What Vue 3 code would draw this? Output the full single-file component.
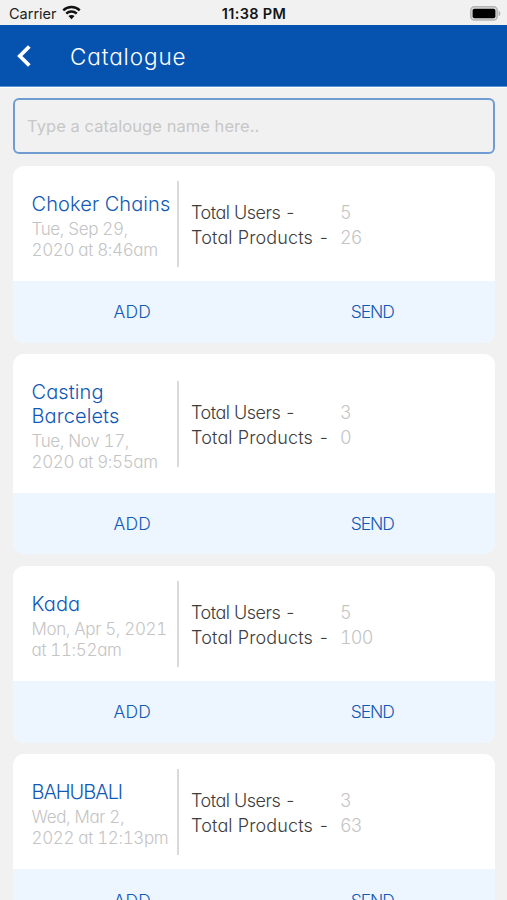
<script setup>
const catalogues = [
  { title: ['Choker Chains'], date: ['Tue, Sep 29,', '2020 at 8:46am'], users: 5, products: 26 },
  { title: ['Casting', 'Barcelets'], date: ['Tue, Nov 17,', '2020 at 9:55am'], users: 3, products: 0 },
  { title: ['Kada'], date: ['Mon, Apr 5, 2021', 'at 11:52am'], users: 5, products: 100 },
  { title: ['BAHUBALI'], caps: true, date: ['Wed, Mar 2,', '2022 at 12:13pm'], users: 3, products: 63 },
]
</script>

<template>
  <div class="screen">
    <div class="status">
      <div class="carrier">
        <span>Carrier</span>
        <svg class="wifi" width="19" height="15" viewBox="0 0 18 14">
          <path d="M1.2 4.9C5.5.7 12.500.7 16.800 4.900" fill="none" stroke="#111" stroke-width="2.300" />
          <path d="M4 8.100c2.800-2.700 7.200-2.700 10 0" fill="none" stroke="#111" stroke-width="2.200" />
          <path d="M6.100 10.400c1.600-1.500 4.200-1.500 5.800 0L9 13.400z" fill="#111" />
        </svg>
      </div>
      <span class="time">11:38 PM</span>
      <svg class="battery" width="31" height="15" viewBox="0 0 31 15">
        <rect x=".8" y=".8" width="26.400" height="13.200" rx="3.600" fill="#dedede" stroke="#b4b4b4" stroke-width="1.500" />
        <rect x="2.600" y="2.800" width="22.800" height="9.400" rx="1.800" fill="#000" />
        <path d="M28.600 4.700c2.300 1 2.300 4.600 0 5.600z" fill="#b0b0b0" />
      </svg>
    </div>

    <header class="bar">
      <svg class="back" width="16" height="24" viewBox="0 0 16 24">
        <path d="M13.300 2.500 3.800 12l9.500 9.500" fill="none" stroke="#fff" stroke-width="3.800" />
      </svg>
      <h1>Catalogue</h1>
    </header>

    <div class="search">
      <input type="text" placeholder="Type a catalouge name here.." />
    </div>

    <main class="list">
      <article v-for="c in catalogues" :key="c.title[0]" class="card">
        <div class="body">
          <div class="info">
            <h2 :class="{ caps: c.caps }"><span v-for="t in c.title" :key="t">{{ t }}</span></h2>
            <p><span v-for="d in c.date" :key="d">{{ d }}</span></p>
          </div>
          <div class="divider"></div>
          <dl class="stats">
            <dt class="users">Total Users -</dt>
            <dd>{{ c.users }}</dd>
            <dt>Total Products -</dt>
            <dd>{{ c.products }}</dd>
          </dl>
        </div>
        <div class="actions">
          <button>ADD</button>
          <button>SEND</button>
        </div>
      </article>
    </main>
  </div>
</template>

<style>
body {
  margin: 0;
  background: #f1f1f1;
}
</style>

<style scoped>
.screen {
  height: 900px;
  overflow: hidden;
  background: #f1f1f1;
  font-family: Inter, "Liberation Sans", sans-serif;
  font-feature-settings: "cv11" 1, "calt" 0, "tnum" 1;
  font-weight: 300;
}
.status {
  display: grid;
  grid-template-columns: 1fr auto 1fr;
  align-items: center;
  height: 25px;
  padding: 2px 6px 0 9px;
  box-sizing: border-box;
  font-feature-settings: normal;
  color: #222;
}
.carrier {
  display: flex;
  align-items: center;
  gap: 5px;
  font-size: 14.5px;
  font-weight: 400;
}
.wifi {
  margin-top: -2px;
}
.time {
  margin-right: 2px;
  font-size: 14.5px;
  font-weight: 600;
  letter-spacing: 0.35px;
  color: #151515;
}
.battery {
  justify-self: end;
}
.bar {
  display: flex;
  align-items: center;
  height: 62px;
  padding-left: 16px;
  box-sizing: border-box;
  background: #0653af;
  border-bottom: 1px solid #5c94d2;
  box-shadow: 0 1px 0 #fff;
}
h1 {
  margin: 2px 0 0 38px;
  font-size: 22.5px;
  font-weight: 300;
  letter-spacing: 0.9px;
  color: #fff;
}
.search {
  margin: 11px 12px 0 13px;
}
input {
  display: block;
  width: 100%;
  height: 56px;
  padding: 0 12px;
  box-sizing: border-box;
  border: 2px solid #6f9dd2;
  border-radius: 6px;
  background: #f1f1f1;
  font: 400 16.5px Inter, sans-serif;
  letter-spacing: 0.05px;
  outline: none;
}
input::placeholder {
  color: #c7c7c7;
  opacity: 1;
}
.list {
  display: flex;
  flex-direction: column;
  gap: 11.7px;
  padding: 12px 12px 0 13px;
}
.card {
  flex: none;
  border-radius: 11px;
  overflow: hidden;
  background: #fff;
}
.body {
  display: flex;
  align-items: center;
  min-height: 115px;
}
.info {
  align-self: flex-start;
  width: 145.5px;
  padding: 25.5px 0 20.1px 18.5px;
}
h2 {
  margin: 0;
  font-size: 20px;
  line-height: 24.1px;
  font-weight: 300;
  letter-spacing: 0.1px;
  color: #1159b5;
}
h2.caps {
  letter-spacing: -1.05px;
}
h2 span,
p span {
  display: block;
  white-space: nowrap;
}
p {
  margin: 3px 0 0;
  font-size: 17px;
  line-height: 21px;
  letter-spacing: -0.35px;
  color: #c4c4c4;
}
.divider {
  width: 2px;
  height: 86px;
  background: #d9d9d9;
}
.stats {
  display: grid;
  grid-template-columns: 149px auto;
  margin: 2px 0 0 12px;
  font-size: 18px;
  line-height: 25px;
  color: #3c3c3c;
}
dt {
  white-space: nowrap;
  letter-spacing: 0.15px;
}
dt.users {
  letter-spacing: -0.48px;
}
dd {
  margin: 0;
  letter-spacing: -0.8px;
  color: #c4c4c4;
}
.actions {
  display: grid;
  grid-template-columns: 1fr 1fr;
  height: 61.5px;
  padding-right: 3px;
  background: #edf5ff;
}
button {
  padding: 0;
  border: 0;
  background: none;
  font: inherit;
  font-size: 17.5px;
  letter-spacing: -1.05px;
  color: #1159b5;
}
button:first-child {
  padding-right: 1px;
  letter-spacing: 0.2px;
}
</style>
